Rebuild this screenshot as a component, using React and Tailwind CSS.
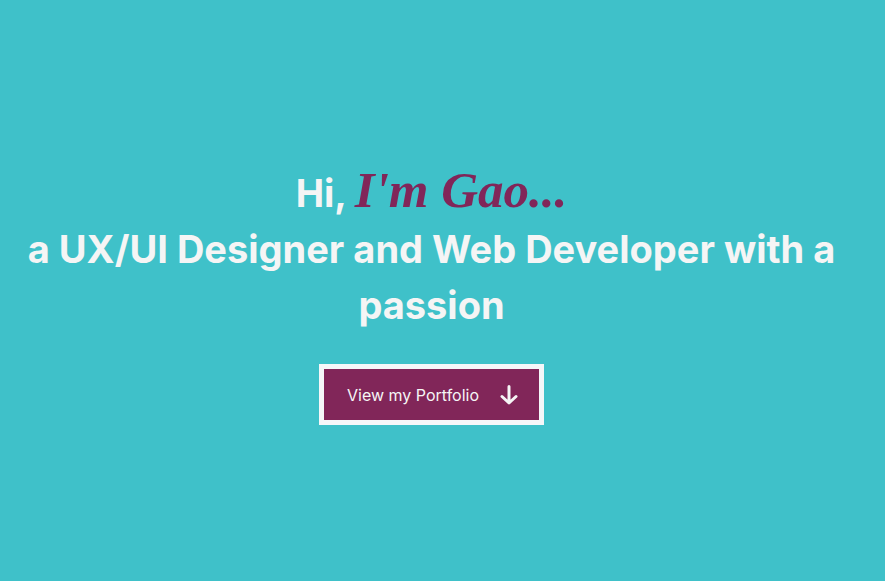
export default function App() {
  return (
    <div className="min-h-screen bg-white pr-[2px]">
      <main className="flex min-h-screen flex-col items-center bg-[#3fc1c9] pt-[162px] pr-[22px] font-['Inter',sans-serif]">
        <h1 className="w-full px-3 text-center text-[38px] leading-[56px] font-bold text-[#f5f5f5]">
          Hi,{" "}
          <span className="font-['Liberation_Serif',serif] text-[51px] italic text-[#812659]">
            I'm Gao...
          </span>
          <br />
          a UX/UI Designer and Web Developer with a passion
        </h1>
        <button
          type="button"
          className="mt-[31px] flex h-[61px] w-[225px] items-center justify-between border-[5px] border-[#f5f7f9] bg-[#812659] pr-[21px] pl-[23px] text-[16px] text-[#f5f5f5]"
        >
          View my Portfolio
          <svg
            className="h-[20px] w-[18px]"
            viewBox="0 0 18 20"
            fill="none"
            stroke="currentColor"
            strokeWidth="3"
            strokeLinecap="round"
            strokeLinejoin="round"
            aria-hidden="true"
          >
            <path d="M9 1.5v16M2 11.5l7 6.5 7-6.5" />
          </svg>
        </button>
      </main>
    </div>
  );
}
